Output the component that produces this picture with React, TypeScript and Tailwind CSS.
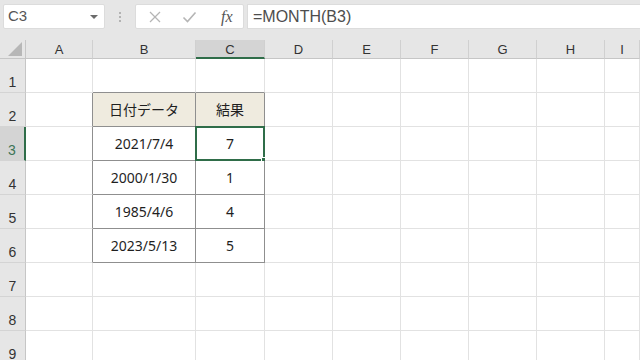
import React from 'react';

// ─── Sheet data ──────────────────────────────────────────────────────────────
const COLS = ['A', 'B', 'C', 'D', 'E', 'F', 'G', 'H', 'I'];
const ROWS = [1, 2, 3, 4, 5, 6, 7, 8, 9];

const CELLS: Record<string, string> = {
  B2: '日付データ', C2: '結果',
  B3: '2021/7/4', C3: '7',
  B4: '2000/1/30', C4: '1',
  B5: '1985/4/6', C5: '4',
  B6: '2023/5/13', C6: '5',
};

const inTable = (c: string, r: number) => (c === 'B' || c === 'C') && r >= 2 && r <= 6;

const cellFont = { fontFamily: '"Noto Sans", "Noto Sans CJK JP", sans-serif' };
const uiFont = { fontFamily: '"Liberation Sans", Arial, sans-serif' };

function FormulaBar() {
  return (
    <div className="h-[40px] flex items-start pt-[4px] bg-[#e6e6e6]" style={uiFont}>
      <div className="ml-[3px] w-[102px] h-[25px] bg-white border border-[#dcdcdc] rounded-[2px] flex items-center justify-between pl-[4px] pr-[6px]">
        <span className="text-[15px] text-[#555]">C3</span>
        <span className="w-0 h-0 border-l-[4px] border-r-[4px] border-t-[4px] border-l-transparent border-r-transparent border-t-[#6b6b6b]" />
      </div>
      <div className="w-[30px] h-[25px] flex flex-col items-center justify-center gap-[2px]">
        <span className="w-[2px] h-[2px] bg-[#b3b3b3]" />
        <span className="w-[2px] h-[2px] bg-[#b3b3b3]" />
        <span className="w-[2px] h-[2px] bg-[#b3b3b3]" />
      </div>
      <div className="w-[109px] h-[25px] bg-white border border-[#dcdcdc] rounded-[2px] flex items-center">
        <svg width="14" height="14" viewBox="0 0 14 14" className="ml-[12px]" fill="none" stroke="#b5b5b5" strokeWidth="1.3">
          <line x1="2" y1="2" x2="12" y2="12" /><line x1="12" y1="2" x2="2" y2="12" />
        </svg>
        <svg width="15" height="14" viewBox="0 0 15 14" className="ml-[20px]" fill="none" stroke="#b5b5b5" strokeWidth="1.6">
          <polyline points="1.5,7.5 5.5,11.5 13.5,2.5" />
        </svg>
        <span className="ml-[24px] text-[16px] italic text-[#555]" style={{ fontFamily: '"Liberation Serif", serif' }}>fx</span>
      </div>
      <div className="ml-[3px] flex-1 h-[25px] bg-white border border-[#dcdcdc] border-r-0 flex items-center pl-[5px]">
        <span className="text-[16px] text-[#4d4d4d]">=MONTH(B3)</span>
      </div>
    </div>
  );
}

function ColumnHeader({ col }: { col: string }) {
  const active = col === 'C';
  return (
    <div
      className={`flex items-center justify-center pt-[2px] text-[13px] border-r border-[#d0d0d0] ${
        active ? 'bg-[#d4d4d4] border-b-2 border-b-[#2f6d49] text-[#333]' : 'bg-[#e6e6e6] border-b border-b-[#c6c6c6] text-[#333]'
      }`}
      style={uiFont}
    >
      {col}
    </div>
  );
}

function RowHeader({ row }: { row: number }) {
  const active = row === 3;
  return (
    <div
      className={`flex items-end justify-center pb-[3px] leading-none text-[14px] border-b border-[#d4d4d4] ${
        active ? 'bg-[#d4d4d4] border-r-2 border-r-[#2f6d49] text-[#3d7556]' : 'bg-[#e6e6e6] border-r border-r-[#c6c6c6] text-[#333]'
      }`}
      style={uiFont}
    >
      {row}
    </div>
  );
}

function Cell({ col, row }: { col: string; row: number }) {
  const key = `${col}${row}`;
  const value = CELLS[key];
  const table = inTable(col, row);
  // borders: right edge of A / bottom edge of row 1 touch the table outline
  const rightDark = table || (col === 'A' && row >= 2 && row <= 6);
  const bottomDark = table || (row === 1 && (col === 'B' || col === 'C'));
  const header = table && row === 2;
  const selected = key === 'C3';

  return (
    <div
      className={`relative flex items-center justify-center text-[14px] text-[#1f1f1f] border-r border-b ${
        rightDark ? 'border-r-[#8f8f8f]' : 'border-r-[#e2e2e2]'
      } ${bottomDark ? 'border-b-[#8f8f8f]' : 'border-b-[#e2e2e2]'} ${header ? 'bg-[#efebdf]' : 'bg-white'}`}
      style={cellFont}
    >
      {value}
      {selected && (
        <div className="absolute -left-[1px] -top-[1px] -right-[1px] -bottom-[1px] border-2 border-[#2f6d49]">
          <div className="absolute -right-[4px] -bottom-[4px] w-[6px] h-[6px] bg-[#2f6d49] border border-white" />
        </div>
      )}
    </div>
  );
}

export default function App() {
  return (
    <div className="w-[640px] h-[360px] overflow-hidden bg-white">
      <FormulaBar />
      <div className="grid grid-cols-[26px_67px_103px_69px_68px_68px_68px_68px_68px_1fr] grid-rows-[19px_repeat(9,34px)]">
        <div className="relative bg-[#e6e6e6] border-r border-b border-[#c6c6c6]">
          <svg width="16" height="15" viewBox="0 0 16 15" className="absolute right-[2px] bottom-[1px]">
            <polygon points="15,0 15,14 1,14" fill="#b7b7b7" />
          </svg>
        </div>
        {COLS.map((c) => <ColumnHeader key={c} col={c} />)}
        {ROWS.map((r) => (
          <React.Fragment key={r}>
            <RowHeader row={r} />
            {COLS.map((c) => <Cell key={c} col={c} row={r} />)}
          </React.Fragment>
        ))}
      </div>
    </div>
  );
}
